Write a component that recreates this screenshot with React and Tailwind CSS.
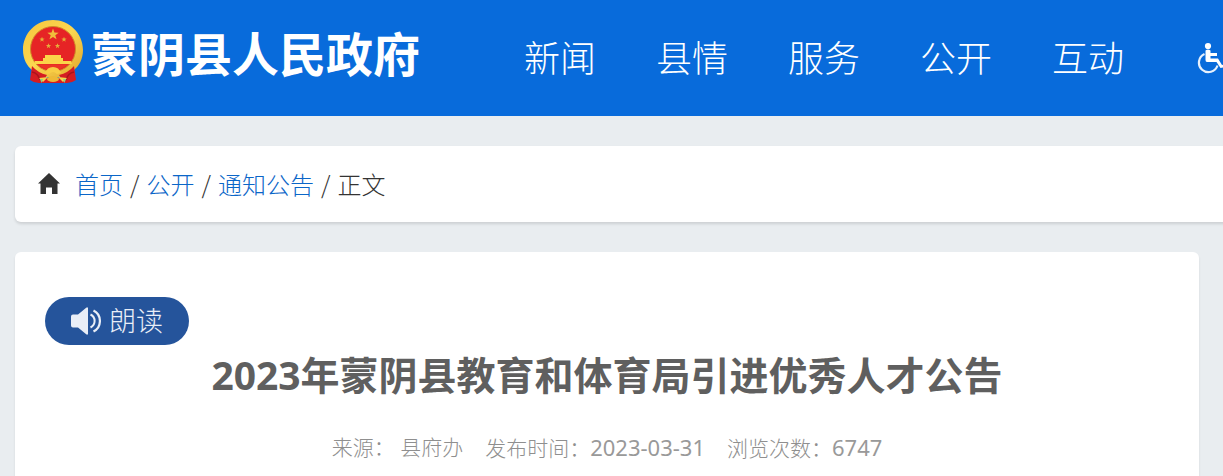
import React from 'react';

const NAV_ITEMS = ['新闻', '县情', '服务', '公开', '互动'];

const CRUMBS = ['首页', '公开', '通知公告'];

const META = [
  { label: '来源： ', value: '县府办' },
  { label: '发布时间：', value: '2023-03-31', numeric: true },
  { label: '浏览次数：', value: '6747', numeric: true },
];

const STAR = '0,-10 2.4,-3.2 9.5,-3.1 3.8,1.2 5.9,8.1 0,4 -5.9,8.1 -3.8,1.2 -9.5,-3.1 -2.4,-3.2';

function Emblem() {
  return (
    <svg className="h-16 w-[60px] shrink-0" viewBox="0 0 60 64" aria-hidden="true">
      <defs>
        <linearGradient id="gold" x1="0" y1="0" x2="1" y2="1">
          <stop offset="0" stopColor="#f6c63c" />
          <stop offset="0.5" stopColor="#fbd751" />
          <stop offset="1" stopColor="#dfa52b" />
        </linearGradient>
      </defs>
      {/* wreath */}
      <path d="M30 0 C13 0 0 13 0 30 C0 39 4 46 9 50 Q18 53 22 57 H38 Q43 53 51 50 C56 46 60 39 60 30 C60 13 46 0 30 0 Z" fill="url(#gold)" />
      {/* ribbon */}
      <path d="M9 46 Q15 53 24 55 L22 58 H38 L36 55 Q45 53 51 46 L53 60 Q49 63 44 63 H16 Q11 63 7 60 Z" fill="#d51c22" />
      <path d="M9 52 Q15 53 17 60 M51 52 Q45 53 43 60" fill="none" stroke="#a9141b" strokeWidth="1.5" />
      <circle cx="30" cy="29" r="22.5" fill="#e62425" stroke="#d08b29" strokeWidth="1" />
      <polygon points={STAR} transform="translate(30 14.500) scale(0.6)" fill="#f0bd3b" />
      <polygon points={STAR} transform="translate(19 19.500) scale(0.28)" fill="#e5b13b" />
      <polygon points={STAR} transform="translate(41 19.500) scale(0.28)" fill="#e5b13b" />
      <polygon points={STAR} transform="translate(25.500 26) scale(0.28)" fill="#e5b13b" />
      <polygon points={STAR} transform="translate(34.500 26) scale(0.28)" fill="#e5b13b" />
      {/* gate */}
      <path d="M22 35 H38 V38 H40 V41 H48 L49 44 H11 L12 41 H20 V38 H22 Z" fill="#fbd549" />
      <path d="M15 44.500 H45 Q38 50 30 50 Q22 50 15 44.500 Z" fill="#ec3626" />
      {/* gear and tassels */}
      <path d="M22 53 Q24 47 30 47 Q36 47 38 53 L34 54 Q30 50 26 54 Z" fill="#f8cd45" />
      <ellipse cx="30" cy="59" rx="6" ry="3" fill="#eeb936" />
      <path d="M16 58 L25 57 L20 62 Z M44 58 L35 57 L40 62 Z" fill="#f8d24c" />
      <path d="M17 59 L20 59 L18.500 63 Z M43 59 L40 59 L41.500 63 Z" fill="#8fcf83" />
    </svg>
  );
}

function WheelchairIcon() {
  return (
    <svg className="h-8 w-8 shrink-0" viewBox="0 0 32 32" fill="none" stroke="#fff" aria-hidden="true">
      <circle cx="11" cy="4" r="3.100" fill="#fff" stroke="none" />
      <path d="M8.500 8.500 Q11 6.500 13.500 8.500 V11 H20 V14 H13.500 V16.500 H21 L25 23 L28 22 V25 L23.500 26 L19.500 20 H10 Q8.500 20 8.500 18 Z" fill="#fff" stroke="none" />
      <path d="M7.500 12 A9.500 9.500 0 1 0 20.500 23.500" strokeWidth="2.200" strokeOpacity="0.9" />
    </svg>
  );
}

function HomeIcon() {
  return (
    <svg className="h-[22px] w-[22px] shrink-0" viewBox="0 0 22 22" fill="#333" aria-hidden="true">
      <path d="M11 0 L22 10.500 H19.500 V21 H14 V14.500 H8 V21 H2.500 V10.500 H0 Z" />
    </svg>
  );
}

function SpeakerIcon() {
  return (
    <svg className="h-7 w-[30px] shrink-0" viewBox="0 0 30 28" fill="none" stroke="#e9eef7" aria-hidden="true">
      <path d="M2 7.500 H7 L15.500 0.500 H17 V27.500 H15.500 L7 20.500 H2 Q0 20.500 0 18.500 V9.500 Q0 7.500 2 7.500 Z" fill="#e9eef7" stroke="none" />
      <path d="M19.500 7.500 A7.200 7.200 0 0 1 19.500 20.500" strokeWidth="2" />
      <path d="M22.500 3.500 A11.800 11.800 0 0 1 22.500 24.500" strokeWidth="2.200" />
    </svg>
  );
}

export default function App() {
  return (
    <div className="min-h-screen overflow-hidden bg-[#e9edf0] font-['Noto_Sans','Noto_Sans_CJK_SC',sans-serif]">
      <header className="flex h-29 items-center overflow-hidden bg-[#086bdb] pl-[23px] text-white">
        <a href="#home" className="flex shrink-0 items-end gap-2 pb-3">
          <Emblem />
          <span className="text-[47px] leading-[60px] font-bold whitespace-nowrap">蒙阴县人民政府</span>
        </a>
        <nav className="ml-[104px] flex shrink-0 gap-[60px] pb-1 text-4xl font-light">
          {NAV_ITEMS.map((item) => (
            <a key={item} href="#nav" className="font-['Noto_Sans_CJK_SC',sans-serif]">{item}</a>
          ))}
        </nav>
        <a href="#accessible" aria-label="无障碍" className="ml-[73px] shrink-0">
          <WheelchairIcon />
        </a>
      </header>

      <main className="pt-[30px] pl-[15px]">
        {/* breadcrumb bar runs off the right edge */}
        <nav className="-mr-4 flex h-19 items-center gap-[15px] rounded-md bg-white pl-[23px] shadow-[0_2px_3px_rgba(0,0,0,0.12)]">
          <HomeIcon />
          <ol className="flex gap-[7px] font-['Noto_Sans_CJK_SC',sans-serif] text-2xl font-light text-[#333]">
            {CRUMBS.map((crumb) => (
              <li key={crumb} className="flex gap-[7px]">
                <a href="#crumb" className="text-[#0b66c8]">{crumb}</a>
                <span>/</span>
              </li>
            ))}
            <li>正文</li>
          </ol>
        </nav>

        <article className="mt-[30px] mr-6 min-h-60 rounded-md bg-white px-[30px] pt-[45px] shadow-[0_2px_3px_rgba(0,0,0,0.08)]">
          <button type="button" className="flex h-12 w-36 items-center justify-center gap-2 rounded-full bg-[#25549b] text-[27px] font-light text-[#e9eef7]">
            <SpeakerIcon />
            朗读
          </button>
          <h1 className="text-center text-[39px] leading-[60px] font-bold text-[#5f5f5f]">
            2023年蒙阴县教育和体育局引进优秀人才公告
          </h1>
          <div className="mt-[26px] flex justify-center gap-[22px] text-[21px] leading-8 font-light text-[#8f8f8f]">
            {META.map(({ label, value, numeric }) => (
              <span key={label}>
                {label}
                {numeric ? <span className="text-[22px] font-normal text-[#999]">{value}</span> : value}
              </span>
            ))}
          </div>
        </article>
      </main>
    </div>
  );
}
